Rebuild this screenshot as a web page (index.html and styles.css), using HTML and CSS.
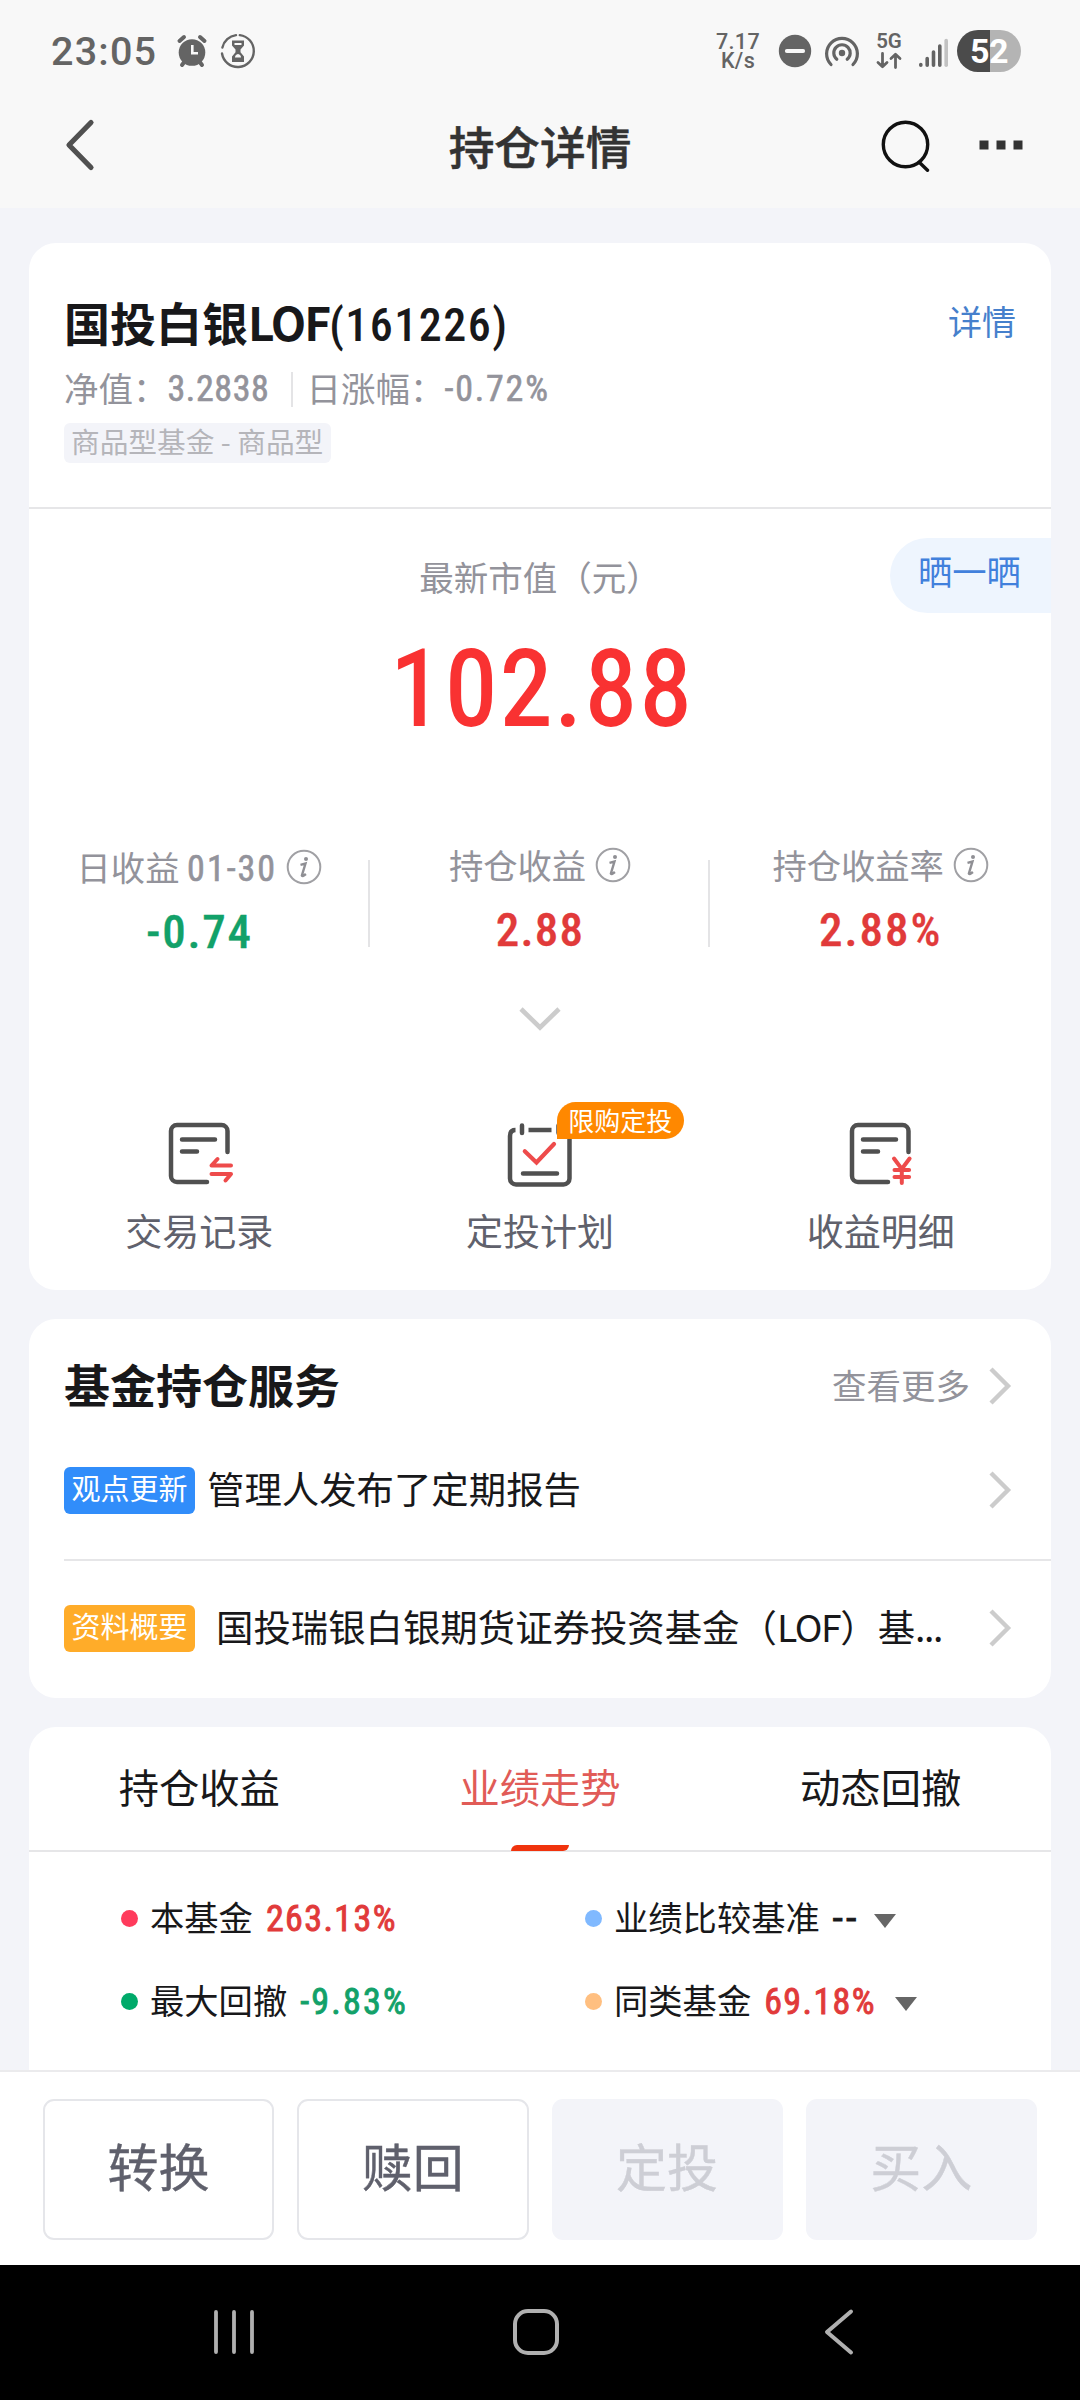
FILE: index.html
```html
<!DOCTYPE html>
<html lang="zh-CN">
<head>
<meta charset="utf-8">
<title>持仓详情</title>
<link rel="stylesheet" href="styles.css">
</head>
<body>
<div class="screen">
  <header class="top">
    <div class="status">
      <span class="time">23:05</span>
      <svg class="st-alarm" width="32" height="34" viewBox="0 0 32 34"><g fill="none" stroke="#646464" stroke-width="4" stroke-linecap="round"><path d="M3.500 7 8 3M28.500 7 24 3M6 31l3-4M26 31l-3-4"/></g><circle cx="16" cy="18.500" r="13.300" fill="#646464"/><path d="M16.300 11v8.300H22" fill="none" stroke="#f8f8f8" stroke-width="2.600"/></svg>
      <svg class="st-glass" width="36" height="36" viewBox="0 0 36 36"><g fill="none" stroke="#646464" stroke-width="2.400" stroke-linecap="round"><path d="M19.800 2.100A16 16 0 1 1 2 20.500M2.400 14.500A16 16 0 0 1 16 2.100"/></g><path d="M12 7.500h12v5l-3.500 4v2.800l3.500 4.200v5.500H12v-5.500l3.500-4.200v-2.800L12 12.500z" fill="#646464"/><path d="M14.500 10h7v2h-7zM15 24.500q0-3 3-3.500 3 .5 3 3.500z" fill="#f8f8f8"/></svg>
      <span class="speed"><span>7.17</span><span>K/s</span></span>
      <svg class="st-dnd" width="34" height="34" viewBox="0 0 34 34"><circle cx="17" cy="17" r="16.200" fill="#646464"/><path d="M8.800 17h16.400" stroke="#f8f8f8" stroke-width="3.800" stroke-linecap="round"/></svg>
      <svg class="st-hot" width="36" height="34" viewBox="0 0 36 34"><circle cx="18" cy="19" r="3.200" fill="#646464"/><g fill="none" stroke="#646464" stroke-width="3.200" stroke-linecap="round"><path d="M12.800 25.300a8.200 8.200 0 1 1 10.400 0M7 30.500a15.400 15.400 0 1 1 22 0"/></g></svg>
      <span class="net"><b>5G</b><svg width="26" height="17" viewBox="0 0 26 17"><g fill="none" stroke="#646464" stroke-width="2.800" stroke-linecap="round" stroke-linejoin="round"><path d="M6.500 1.500v13M2 10.500l4.500 4.200 4.500-4.200M19.500 15.500v-13M15 6.500l4.500-4.200L24 6.500"/></g></svg></span>
      <svg class="st-sig" width="32" height="32" viewBox="0 0 32 32"><g stroke="#646464" stroke-width="3.600" stroke-linecap="round"><path d="M3.800 27.600v.6M10.200 21.500v6.700M16.500 15v13.200M22.800 9v19.200"/><path stroke="#c2c2c2" d="M29.200 3.500v24.700"/></g></svg>
      <span class="batt">52</span>
    </div>
    <div class="bar">
      <svg width="32" height="54" viewBox="0 0 32 54"><path d="M27 4.500 5 27l22 22.500" fill="none" stroke="#505050" stroke-width="5.200" stroke-linecap="round" stroke-linejoin="round"/></svg>
      <h1>持仓详情</h1>
      <div class="tools">
        <svg width="52" height="54" viewBox="0 0 52 54"><g fill="none" stroke="#111" stroke-width="3.400" stroke-linecap="round"><circle cx="25.500" cy="26.500" r="22.200"/><path d="M39.500 44.500l8 7.800"/></g></svg>
        <svg width="44" height="10" viewBox="0 0 44 10"><path d="M.5.5h9v9h-9zM17.500.5h9v9h-9zM34.500.5h9v9h-9z" fill="#333"/></svg>
      </div>
    </div>
  </header>

  <main>
    <section class="card holding">
      <div class="fund">
        <div class="row name"><h2>国投白银<span class="latin">LOF</span><span class="num">(161226)</span></h2><a>详情</a></div>
        <div class="row meta"><span>净值：</span><b class="num nav">3.2838</b><i></i><span>日涨幅：</span><b class="num pct">-0.72%</b></div>
        <span class="kind">商品型基金 - 商品型</span>
      </div>
      <div class="value">
        <p>最新市值（元）</p>
        <strong class="num">102.88</strong>
        <a class="share">晒一晒</a>
      </div>
      <div class="stats">
        <div class="first"><p><span>日收益 <span class="num">01-30</span></span><svg class="info" viewBox="0 0 36 36"><use href="#info"/></svg></p><b class="num green">-0.74</b></div>
        <div><p><span>持仓收益</span><svg class="info" viewBox="0 0 36 36"><use href="#info"/></svg></p><b class="num red">2.88</b></div>
        <div><p><span>持仓收益率</span><svg class="info" viewBox="0 0 36 36"><use href="#info"/></svg></p><b class="num red pct">2.88%</b></div>
      </div>
      <div class="more"><svg width="44" height="26" viewBox="0 0 44 26"><path d="M3 3l19 18.500L41 3" fill="none" stroke="#ccc" stroke-width="4.600"/></svg></div>
      <div class="actions">
        <a><svg width="68" height="68" viewBox="0 0 68 68"><g fill="none" stroke="#505050" stroke-width="4.500" stroke-linecap="round"><path d="M42 61H12a6 6 0 0 1-6-6V10a6 6 0 0 1 6-6h44.500a6 6 0 0 1 6 6v21"/><path d="M17 18.500h33M17 30.500h15"/></g><g fill="none" stroke="#ee4b4b" stroke-width="4" stroke-linecap="round" stroke-linejoin="round"><path d="M66 44.500H46.500l6-6.500M46.500 53H66l-5.500 6.500"/></g></svg><span>交易记录</span></a>
        <a><svg width="68" height="68" viewBox="0 0 68 68"><g fill="none" stroke="#505050" stroke-width="4.500"><path d="M9.500 9Q4 9 4 15v42.500a6 6 0 0 0 6 6h47.500a6 6 0 0 0 6-6V15q0-6-5.500-6M22.500 9h23"/><path stroke-linecap="round" d="M16 4.500v7.500M52.500 4.500v7.500M17 52.500h34"/></g><path d="M18.800 30.300 30.500 41.500 48 23" fill="none" stroke="#ee4b4b" stroke-width="4.200" stroke-linecap="round"/></svg><span>定投计划</span><em>限购定投</em></a>
        <a><svg width="68" height="68" viewBox="1 0 68 68"><g fill="none" stroke="#505050" stroke-width="4.500" stroke-linecap="round"><path d="M42 61H12a6 6 0 0 1-6-6V10a6 6 0 0 1 6-6h44.500a6 6 0 0 1 6 6v21"/><path d="M17 18.500h33M17 30.500h15"/></g><g fill="none" stroke="#ee4b4b" stroke-width="4" stroke-linecap="round"><path d="M48 37.500l7.800 10.500 7.800-10.500M55.800 48v14M48.500 49h14.600M48.500 56h14.600"/></g></svg><span>收益明细</span></a>
      </div>
    </section>

    <section class="card service">
      <div class="row head"><h2>基金持仓服务</h2><span>查看更多</span><svg class="go" viewBox="0 0 24 38"><use href="#go"/></svg></div>
      <div class="row item blue"><em>观点更新</em><p>管理人发布了定期报告</p><svg class="go" viewBox="0 0 24 38"><use href="#go"/></svg></div>
      <div class="row item gold"><em>资料概要</em><p>国投瑞银白银期货证券投资基金（<span class="latin">LOF</span>）基<span class="latin">...</span></p><svg class="go" viewBox="0 0 24 38"><use href="#go"/></svg></div>
    </section>

    <section class="card trend">
      <nav><a>持仓收益</a><a class="on">业绩走势</a><a>动态回撤</a></nav>
      <div class="legend">
        <div><i class="c1"></i><span>本基金</span><b class="num red">263.13%</b></div>
        <div><i class="c2"></i><span>业绩比较基准</span><b class="num dash">--</b><svg width="24" height="16" viewBox="0 0 24 16"><path d="M1 1h22L12 15z" fill="#666"/></svg></div>
        <div><i class="c3"></i><span>最大回撤</span><b class="num green">-9.83%</b></div>
        <div><i class="c4"></i><span>同类基金</span><b class="num red">69.18%</b><svg width="24" height="16" viewBox="0 0 24 16"><path d="M1 1h22L12 15z" fill="#666"/></svg></div>
      </div>
    </section>
  </main>

  <footer class="trade"><button>转换</button><button>赎回</button><button disabled>定投</button><button disabled>买入</button></footer>

  <div class="sysnav">
    <svg width="42" height="46" viewBox="0 0 42 46"><path d="M3 3v40M21 3v40M39 3v40" stroke="#b0b0b0" stroke-width="3.800" stroke-linecap="round"/></svg>
    <svg class="home" width="48" height="48" viewBox="0 0 48 48"><rect x="3" y="3" width="42" height="42" rx="13" fill="none" stroke="#b0b0b0" stroke-width="4"/></svg>
    <svg class="back" width="32" height="48" viewBox="0 0 32 48"><path d="M28 3.500 4 24l24 20.500" fill="none" stroke="#b0b0b0" stroke-width="4" stroke-linecap="round" stroke-linejoin="round"/></svg>
  </div>
</div>

<svg class="defs" width="0" height="0">
  <symbol id="go" viewBox="0 0 24 38"><path d="M3 2l17 17L3 36" fill="none" stroke="#ccc" stroke-width="4.400"/></symbol>
  <symbol id="info" viewBox="0 0 36 36"><circle cx="18" cy="18" r="16.300" fill="none" stroke="#a0a0a4" stroke-width="2"/><circle cx="20" cy="10" r="2" fill="#8f8f94"/><path d="M14.500 15.800l5-1.300-3.600 12q.5 1.500 4-1.500" fill="none" stroke="#8f8f94" stroke-width="2.400"/></symbol>
</svg>
</body>
</html>
```
FILE: styles.css
```css
* { box-sizing: border-box; margin: 0; padding: 0; }
body { font-family: "Noto Sans CJK SC", sans-serif; background: #f3f4f9; color: #18181a; }
em, i { font-style: normal; }
svg { display: block; flex: none; }
.defs { position: absolute; }
.screen { width: 1080px; height: 2400px; display: flex; flex-direction: column; overflow: hidden; }
.num { font-family: Roboto, sans-serif; font-stretch: 87%; }
.red { color: #e13a3a; }
.green { color: #12a169; }
.row { display: flex; align-items: center; }

.top { height: 208px; flex: none; background: #f8f8f8; }
.status { height: 102px; display: flex; align-items: center; padding-left: 51px; color: #646464; font-family: Roboto, sans-serif; }
.time { width: 125px; font-size: 39.500px; font-weight: 500; letter-spacing: 1.200px; }
.st-glass { margin-left: 12px; }
.speed { display: flex; flex-direction: column; width: 46px; margin-left: 459px; font-size: 21.500px; line-height: 19.500px; font-weight: 500; text-align: center; letter-spacing: .4px; }
.st-dnd { margin-left: 17px; }
.st-hot { margin-left: 12px; }
.net { display: flex; flex-direction: column; align-items: center; width: 26px; margin-left: 16px; gap: 3px; }
.net b { font-size: 20.500px; line-height: 16px; font-weight: 600; }
.st-sig { margin: 4px 0 0 15px; }
.batt { width: 64px; height: 42px; margin-left: 8px; border-radius: 21px; background: linear-gradient(90deg, #4b4b4b 33px, #b4b4b4 33px); color: #fff; font: 700 34px/43px Roboto, sans-serif; text-align: center; letter-spacing: -.5px; }
.bar { height: 86px; display: flex; justify-content: space-between; align-items: center; padding: 0 57px 0 64px; position: relative; }
.bar h1 { position: absolute; left: 0; right: 0; top: 0; text-align: center; font-size: 45.700px; line-height: 87px; font-weight: 500; color: #333; -webkit-text-stroke: .5px #333; }
.tools { display: flex; align-items: center; gap: 47px; }

main { flex: 1; min-height: 0; overflow: hidden; padding: 35px 29px 0; display: flex; flex-direction: column; gap: 29px; }
.card { background: #fff; border-radius: 27px; flex: none; }

.holding { height: 1047px; }
.fund { height: 266px; padding: 44px 35px 0; border-bottom: 2px solid #e6e6e8; }
.name { justify-content: space-between; height: 72px; }
.name h2 { font-size: 46px; line-height: 72px; font-weight: 700; }
.name .latin { letter-spacing: -2px; }
.name .num { font-size: 46px; font-weight: 500; letter-spacing: 1.500px; }
.name a { font-size: 34px; color: #4680cc; padding-bottom: 5px; }
.meta { height: 56px; font-size: 34.500px; color: #93939b; }
.meta .num { font-size: 36px; font-weight: 400; padding-top: 3px; letter-spacing: .6px; -webkit-text-stroke: .6px; }
.meta .pct { letter-spacing: 1.800px; }
.meta i { width: 2px; height: 35px; background: #e4e4e6; margin: 4px 13px 0 22px; }
.kind { display: inline-block; margin-top: 8px; padding: 0 8px 0 7px; height: 40px; border-radius: 6px; background: #f3f4f9; color: #b5b5ba; font-size: 28.700px; line-height: 36px; }

.value { height: 300px; position: relative; text-align: center; padding-top: 41px; }
.value p { font-size: 34.500px; line-height: 52px; color: #93939b; }
.value strong { display: block; font-size: 105px; line-height: 175px; font-weight: 400; letter-spacing: 2.800px; padding-left: 5px; color: #f93232; -webkit-text-stroke: 1.800px #f93232; }
.share { position: absolute; right: 0; top: 29px; width: 161px; height: 75px; border-radius: 38px 0 0 38px; background: #eef5fe; color: #4180dc; font-size: 34.300px; line-height: 65px; padding-left: 28px; text-align: left; }

.stats { display: grid; grid-template-columns: repeat(3, 1fr); height: 182px; padding-top: 30px; }
.stats > div { height: 108px; text-align: center; position: relative; }
.stats > div + div::before { content: ""; position: absolute; left: -2px; top: 21px; width: 2px; height: 87px; background: #e4e4e6; }
.stats p { display: flex; justify-content: center; align-items: center; gap: 9px; height: 52px; font-size: 34.300px; color: #93939b; }
.stats p > span { padding-bottom: 2px; }
.stats .first { padding-top: 2px; }
.stats p .num { font-size: 36px; font-weight: 400; letter-spacing: 2px; -webkit-text-stroke: .6px; }
.stats b { display: block; font-size: 47px; line-height: 78px; font-weight: 500; letter-spacing: 1.200px; -webkit-text-stroke: .3px; }
.stats .green { letter-spacing: 1.700px; }
.stats .pct { letter-spacing: 2px; }
.info { width: 36px; height: 36px; }
.more { height: 60px; padding-top: 15px; display: flex; justify-content: center; }

.actions { display: grid; grid-template-columns: repeat(3, 1fr); padding-top: 70px; }
.actions a { display: flex; flex-direction: column; align-items: center; position: relative; font-size: 37px; color: #60616c; }
.actions span { line-height: 54px; margin-top: 14px; }
.actions em { position: absolute; left: 187px; top: -19px; width: 127px; height: 37px; border-radius: 19px 19px 19px 0; background: #f80; color: #fff; font-size: 26px; line-height: 35px; text-align: center; }

.service { height: 379px; padding-left: 35px; }
.service .go { width: 24px; height: 38px; margin: 0 39px 0 auto; }
.head { height: 134px; }
.head h2 { font-size: 46px; font-weight: 700; line-height: 60px; padding-bottom: 6px; }
.head span { margin-left: auto; font-size: 34.500px; color: #93939b; padding-bottom: 4px; }
.service .head .go { margin-left: 18px; }
.item em { width: 131px; height: 47px; border-radius: 6px; color: #fff; font-size: 29px; line-height: 41px; text-align: center; }
.item p { font-size: 37.400px; line-height: 54px; white-space: nowrap; padding-bottom: 4px; }
.item .latin { letter-spacing: -1.400px; }
.blue { height: 108px; border-bottom: 2px solid #e6e6e8; padding-bottom: 32px; }
.blue em { background: #318dfa; }
.blue p { margin-left: 12px; }
.gold { height: 134px; }
.gold em { background: #ffac29; }
.gold p { margin-left: 21px; }

.trend { height: 400px; }
.trend nav { display: grid; grid-template-columns: repeat(3, 1fr); height: 125px; border-bottom: 2px solid #e6e6e8; font-size: 40.300px; line-height: 118px; text-align: center; }
.on { color: #e15b57; position: relative; }
.on::after { content: ""; position: absolute; left: 50%; bottom: -1px; width: 58px; height: 6px; margin-left: -29px; background: #f0330d; border-radius: 6px 0 6px 0; }
.legend { display: grid; grid-template-columns: 464px 1fr; grid-auto-rows: 83px; padding: 25px 0 0 92px; font-size: 34.300px; }
.legend div { display: flex; align-items: center; }
.legend span { padding-bottom: 6px; }
.legend i { width: 17px; height: 17px; border-radius: 50%; margin-right: 12px; }
.legend b { font-size: 36px; font-weight: 400; margin-left: 13px; letter-spacing: 1.400px; -webkit-text-stroke: .9px; }
.legend .green { letter-spacing: 2.200px; }
.legend .dash { font-stretch: 100%; letter-spacing: 3.500px; margin-right: -5px; }
.legend svg { margin-left: 18px; margin-top: 4px; }
.c1 { background: #ff3b5c; } .c2 { background: #80b9ff; } .c3 { background: #00aa6a; } .c4 { background: #ffbf80; }

.trade { height: 195px; flex: none; background: #fff; border-top: 2px solid #ebebed; padding: 27px 43px 0; display: grid; grid-template-columns: repeat(4, 1fr); column-gap: 23px; grid-auto-rows: 141px; }
.trade button { border: 2px solid #e5e6ea; border-radius: 11px; background: #fff; color: #5f606c; font: 400 51px/128px "Noto Sans CJK SC", sans-serif; padding-bottom: 9px; -webkit-text-stroke: .4px; }
.trade button:disabled { border: 0; background: #f3f4f9; color: #cdced5; }

.sysnav { height: 135px; flex: none; background: #000; display: flex; align-items: center; padding: 0 0 1px 213px; }
.home { margin-left: 257px; }
.back { margin-left: 263px; }
```
